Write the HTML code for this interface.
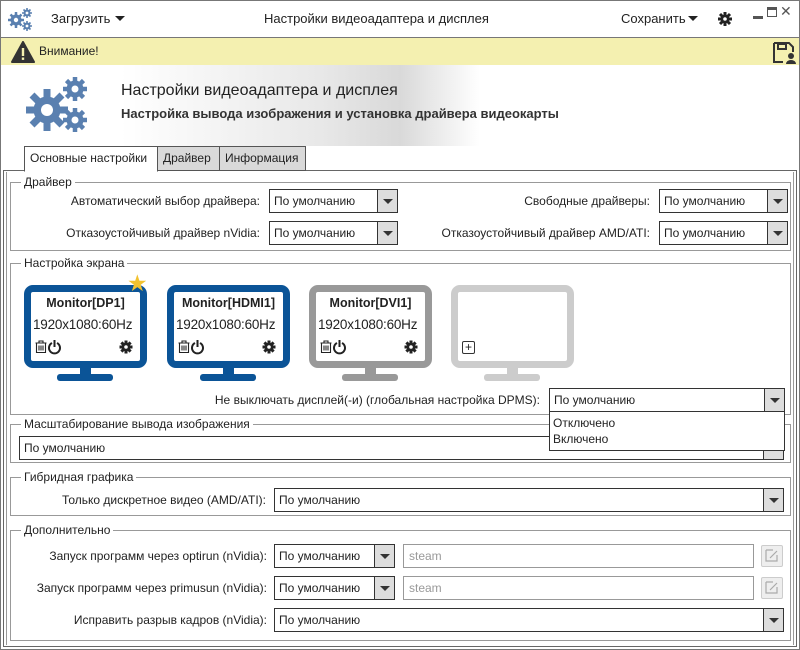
<!DOCTYPE html>
<html><head><meta charset="utf-8"><style>
*{box-sizing:border-box;margin:0;padding:0}
body{width:800px;height:650px;position:relative;background:#fff;font-family:"Liberation Sans","DejaVu Sans",sans-serif;font-size:12px;color:#222;overflow:hidden}
.a{position:absolute}
.win{left:0;top:0;width:800px;height:650px;border:1px solid #777}
.grp{position:absolute;border:1px solid #999;}
.grp>.t{position:absolute;top:-8px;left:10px;background:#fff;padding:0 3px;font-size:12px;line-height:14px}
.cb{position:absolute;height:24px;border:1px solid #333;background:#fff;padding-left:4px;line-height:22px;font-size:12px}
.cb .ar{position:absolute;right:0;top:0;width:20px;height:22px;background:#ddd;border-left:1px solid #333}
.cb .ar:after{content:"";position:absolute;left:5px;top:9px;border-left:5px solid transparent;border-right:5px solid transparent;border-top:5px solid #333}
.lb{position:absolute;text-align:right;line-height:24px;font-size:12px}
.tf{position:absolute;height:24px;border:1px solid #999;background:#fff;padding-left:5px;line-height:22px;color:#999}
.eb{position:absolute;width:22px;height:22px;border:1px solid #ccc;background:#eee;border-radius:2px}
.mon{position:absolute;top:285px;width:123px;height:83px;border:7px solid;border-radius:9px;background:#fff}
.mon .n{position:absolute;top:4px;width:100%;text-align:center;font-weight:bold;font-size:12.5px}
.mon .r{position:absolute;top:25px;left:2px;font-size:13.5px;letter-spacing:-0.2px}
.neck{position:absolute;top:367px;width:11px;height:8px}
.base{position:absolute;top:374px;width:56px;height:7px;border-radius:3px}
.tab{position:absolute;top:146px;height:25px;border:1px solid #555;line-height:22px;padding:0 5px;font-size:12px}
</style></head><body>
<div class="a win"></div>
<svg class="a" style="left:8px;top:7px" width="26" height="24" viewBox="0 0 26 24"><g fill="#5a80b0"><circle cx="8" cy="13" r="5.5"/><circle cx="19" cy="6" r="3.5"/><circle cx="19" cy="19" r="3.5"/></g><g stroke="#5a80b0" stroke-width="2.5"><path d="M8 5v16M0 13h16M2.5 7.5l11 11M13.5 7.5l-11 11"/><path d="M19 1v10M14 6h10M15.5 2.5l7 7M22.5 2.5l-7 7M19 14v10M14 19h10M15.5 15.5l7 7M22.5 15.5l-7 7" stroke-width="1.6"/></g><g fill="#fff"><circle cx="8" cy="13" r="2.2"/><circle cx="19" cy="6" r="1.4"/><circle cx="19" cy="19" r="1.4"/></g></svg>
<div class="a" style="left:51px;top:11px;font-size:13px">Загрузить</div>
<div class="a" style="left:115px;top:16px;border-left:5px solid transparent;border-right:5px solid transparent;border-top:5px solid #222"></div>
<div class="a" style="left:264px;top:11px;font-size:13px">Настройки видеоадаптера и дисплея</div>
<div class="a" style="left:621px;top:11px;font-size:13px">Сохранить</div>
<div class="a" style="left:688px;top:16px;border-left:5px solid transparent;border-right:5px solid transparent;border-top:5px solid #222"></div>
<svg class="a" style="left:718px;top:12px" width="14" height="14" viewBox="0 0 14 14"><g stroke="#222" stroke-width="3"><path d="M7 0v14M0 7h14M2 2l10 10M12 2L2 12"/></g><circle cx="7" cy="7" r="4.5" fill="#222"/><circle cx="7" cy="7" r="1.8" fill="#fff"/></svg>
<div class="a" style="left:753px;top:16px;width:10px;height:3px;background:#555"></div>
<div class="a" style="left:767px;top:7px;width:10px;height:10px;border:1.5px solid #555;border-top-width:3px"></div>
<div class="a" style="left:780px;top:3px;font-size:14px;color:#555">✕</div>
<div class="a" style="left:1px;top:37px;width:798px;height:1px;background:#777"></div>
<div class="a" style="left:1px;top:38px;width:798px;height:27px;background:#f4f0b0"></div>
<svg class="a" style="left:11px;top:41px" width="24" height="22" viewBox="0 0 24 22"><path d="M12 1L23 21H1Z" fill="#333" stroke="#333" stroke-linejoin="round" stroke-width="2"/><rect x="10.8" y="7" width="2.4" height="8" fill="#f4f0b0"/><rect x="10.8" y="16.5" width="2.4" height="2.4" fill="#f4f0b0"/></svg>
<div class="a" style="left:39px;top:44px;font-size:12px">Внимание!</div>
<svg class="a" style="left:772px;top:41px" width="26" height="24" viewBox="0 0 26 24"><path d="M2 2h15l4 4v5M11 21H2V2" fill="none" stroke="#333" stroke-width="2"/><rect x="6" y="3" width="8" height="5" fill="none" stroke="#333" stroke-width="2"/><circle cx="19" cy="15" r="3" fill="#333"/><path d="M14 23a5 4 0 0 1 10 0z" fill="#333"/></svg>
<div class="a" style="left:1px;top:65px;width:798px;height:81px;background:linear-gradient(90deg,#fff 0%,#fff 15%,#e8e8e8 40%,#d9d9d9 50%,#fff 60%,#fff 100%)"></div>
<svg class="a" style="left:26px;top:76px" width="66" height="58" viewBox="0 0 66 58"><g stroke="#5a80b0" fill="#5a80b0"><circle cx="21" cy="34" r="13"/><path d="M21 13v42M0 34h42M6 19l30 30M36 19L6 49" stroke-width="7"/><circle cx="49" cy="13" r="8"/><path d="M49 1v24M37 13h24M40.5 4.5l17 17M57.5 4.5l-17 17" stroke-width="4.5"/><circle cx="49" cy="44" r="8"/><path d="M49 32v24M37 44h24M40.5 35.5l17 17M57.5 35.5l-17 17" stroke-width="4.5"/></g><g fill="#fff"><circle cx="21" cy="34" r="6"/><circle cx="49" cy="13" r="3.5"/><circle cx="49" cy="44" r="3.5"/></g></svg>
<div class="a" style="left:121px;top:82px;font-size:16px">Настройки видеоадаптера и дисплея</div>
<div class="a" style="left:121px;top:106px;font-size:13px;font-weight:bold;color:#333">Настройка вывода изображения и установка драйвера видеокарты</div>
<div class="a" style="left:3px;top:170px;width:794px;height:477px;border:1px solid #666"></div>
<div class="a" style="left:6px;top:172px;width:788px;height:473px;border-left:1px solid #999;border-right:1px solid #999"></div>
<div class="tab" style="left:24px;width:134px;background:#fff;border-bottom-color:#fff;height:26px">Основные настройки</div>
<div class="tab" style="left:157px;width:63px;background:#d9d9d9">Драйвер</div>
<div class="tab" style="left:219px;width:87px;background:#d9d9d9">Информация</div>
<div class="grp" style="left:10px;top:182px;width:781px;height:69px"><span class="t">Драйвер</span></div>
<div class="lb" style="left:20px;top:189px;width:240px">Автоматический выбор драйвера:</div>
<div class="cb" style="left:269px;top:189px;width:129px">По умолчанию<span class="ar"></span></div>
<div class="lb" style="left:420px;top:189px;width:230px">Свободные драйверы:</div>
<div class="cb" style="left:659px;top:189px;width:129px">По умолчанию<span class="ar"></span></div>
<div class="lb" style="left:20px;top:221px;width:240px">Отказоустойчивый драйвер nVidia:</div>
<div class="cb" style="left:269px;top:221px;width:129px">По умолчанию<span class="ar"></span></div>
<div class="lb" style="left:400px;top:221px;width:250px">Отказоустойчивый драйвер AMD/ATI:</div>
<div class="cb" style="left:659px;top:221px;width:129px">По умолчанию<span class="ar"></span></div>
<div class="grp" style="left:10px;top:263px;width:781px;height:152px"><span class="t">Настройка экрана</span></div>
<div class="mon" style="left:24px;border-color:#0b5497"><div class="n">Monitor[DP1]</div><div class="r">1920x1080:60Hz</div></div>
<div class="neck" style="left:80px;background:#0b5497"></div><div class="base" style="left:57px;background:#0b5497"></div>
<div class="a" style="left:127px;top:271px;font-size:23px;color:#f2c230;line-height:24px">★</div>
<div class="mon" style="left:167px;border-color:#0b5497"><div class="n">Monitor[HDMI1]</div><div class="r">1920x1080:60Hz</div></div>
<div class="neck" style="left:223px;background:#0b5497"></div><div class="base" style="left:200px;background:#0b5497"></div>
<div class="mon" style="left:309px;border-color:#999"><div class="n">Monitor[DVI1]</div><div class="r">1920x1080:60Hz</div></div>
<div class="neck" style="left:365px;background:#999"></div><div class="base" style="left:342px;background:#999"></div>
<div class="mon" style="left:451px;border-color:#ccc"></div>
<div class="neck" style="left:507px;background:#ccc"></div><div class="base" style="left:484px;background:#ccc"></div>
<div class="a" style="left:462px;top:341px;width:13px;height:13px;border:1px solid #333;border-radius:2px;font-size:12px;line-height:10px;text-align:center">+</div>
<svg class="a" style="left:0;top:0" width="800" height="650"><defs><g id="ic"><path d="M0.5 3h11M4 3V1h4V3M1.5 3.5v9h9v-9M4 5.5v5M6 5.5v5M8 5.5v5" fill="none" stroke="#222" stroke-width="1.1"/><path d="M17 3a5.5 5.5 0 1 0 5 0" fill="none" stroke="#222" stroke-width="2"/><path d="M19.5 0v7" stroke="#222" stroke-width="2"/><g transform="translate(91 7)"><path d="M0-6.5v13M-6.5 0h13M-4.6-4.6l9.2 9.2M4.6-4.6l-9.2 9.2" stroke="#222" stroke-width="3"/><circle r="4.5" fill="#222"/><circle r="1.8" fill="#fff"/></g></g></defs><use href="#ic" x="35" y="340"/><use href="#ic" x="178" y="340"/><use href="#ic" x="320" y="340"/></svg>
<div class="lb" style="left:150px;top:388px;width:390px">Не выключать дисплей(-и) (глобальная настройка DPMS):</div>
<div class="grp" style="left:10px;top:424px;width:781px;height:39px"><span class="t">Масштабирование вывода изображения</span></div>
<div class="cb" style="left:19px;top:436px;width:765px">По умолчанию<span class="ar"></span></div>
<div class="cb" style="left:549px;top:388px;width:236px">По умолчанию<span class="ar"></span></div>
<div class="a" style="left:549px;top:411px;width:236px;height:40px;border:1px solid #333;background:#fff;padding:3px 3px;line-height:16px">Отключено<br>Включено</div>
<div class="grp" style="left:10px;top:477px;width:781px;height:39px"><span class="t">Гибридная графика</span></div>
<div class="lb" style="left:20px;top:488px;width:246px">Только дискретное видео (AMD/ATI):</div>
<div class="cb" style="left:274px;top:488px;width:510px">По умолчанию<span class="ar"></span></div>
<div class="grp" style="left:10px;top:530px;width:781px;height:111px"><span class="t">Дополнительно</span></div>
<div class="lb" style="left:16px;top:544px;width:251px">Запуск программ через optirun (nVidia):</div>
<div class="cb" style="left:274px;top:544px;width:121px">По умолчанию<span class="ar"></span></div>
<div class="tf" style="left:403px;top:544px;width:351px">steam</div>
<div class="eb" style="left:761px;top:545px"></div>
<div class="lb" style="left:16px;top:576px;width:251px">Запуск программ через primusun (nVidia):</div>
<div class="cb" style="left:274px;top:576px;width:121px">По умолчанию<span class="ar"></span></div>
<div class="tf" style="left:403px;top:576px;width:351px">steam</div>
<div class="eb" style="left:761px;top:577px"></div>
<svg class="a" style="left:0;top:0" width="800" height="650"><g fill="none" stroke="#aaa" stroke-width="1.2"><path d="M766 550h7M766 550v11h11v-6M770 558l7-7"/><path d="M766 582h7M766 582v11h11v-6M770 590l7-7"/></g></svg>
<div class="lb" style="left:16px;top:608px;width:251px">Исправить разрыв кадров (nVidia):</div>
<div class="cb" style="left:274px;top:608px;width:510px">По умолчанию<span class="ar"></span></div>
</body></html>
